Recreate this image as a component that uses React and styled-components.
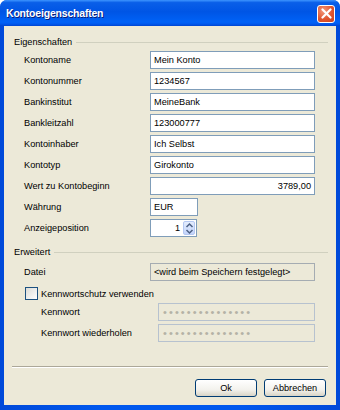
import React from "react";
import styled, { createGlobalStyle } from "styled-components";

const GlobalStyle = createGlobalStyle`
  * { box-sizing: border-box; }
  body {
    margin: 0;
    background: #ffffff;
    font-family: "Liberation Sans", Arial, sans-serif;
  }
`;

const mainFields = [
  { label: "Kontoname", value: "Mein Konto" },
  { label: "Kontonummer", value: "1234567" },
  { label: "Bankinstitut", value: "MeineBank" },
  { label: "Bankleitzahl", value: "123000777" },
  { label: "Kontoinhaber", value: "Ich Selbst" },
  { label: "Kontotyp", value: "Girokonto" },
  { label: "Wert zu Kontobeginn", value: "3789,00", align: "right" },
  { label: "Währung", value: "EUR", width: 48 },
];

const DOTS = "•••••••••••••••";

export default function App() {
  return (
    <>
      <GlobalStyle />
      <Window>
        <TitleBar>
          <Title>Kontoeigenschaften</Title>
          <CloseButton aria-label="Schließen">
            <svg width="11" height="11" viewBox="0 0 11 11">
              <path d="M1.5 1.5 L9.5 9.5 M9.5 1.5 L1.5 9.5" stroke="#fff" strokeWidth="2.2" strokeLinecap="round" />
            </svg>
          </CloseButton>
        </TitleBar>
        <Frame>
          <Client>
            <GroupHeader>Eigenschaften</GroupHeader>
            <FieldGrid $labelWidth={126} $indent={10} $top={3}>
              {mainFields.map((f) => (
                <React.Fragment key={f.label}>
                  <Label>{f.label}</Label>
                  <Field $width={f.width || 165} $align={f.align}>
                    {f.value}
                  </Field>
                </React.Fragment>
              ))}
              <Label>Anzeigeposition</Label>
              <Spinner>
                <SpinValue>1</SpinValue>
                <SpinButtons>
                  <svg width="9" height="13" viewBox="0 0 9 13">
                    <path d="M1.5 5 L4.5 2 L7.5 5" fill="none" stroke="#4d6185" strokeWidth="1.5" />
                    <path d="M1.5 8 L4.5 11 L7.5 8" fill="none" stroke="#4d6185" strokeWidth="1.5" />
                  </svg>
                </SpinButtons>
              </Spinner>
            </FieldGrid>

            <GroupHeader $top={9}>Erweitert</GroupHeader>
            <FieldGrid $labelWidth={126} $indent={10} $top={5}>
              <Label>Datei</Label>
              <Field $width={165} $readonly>
                &lt;wird beim Speichern festgelegt&gt;
              </Field>
            </FieldGrid>
            <CheckRow>
              <CheckBox />
              <Label>Kennwortschutz verwenden</Label>
            </CheckRow>
            <FieldGrid $labelWidth={117} $indent={27} $top={3}>
              <Label>Kennwort</Label>
              <Field $width={157} $disabled>
                <Dots>{DOTS}</Dots>
              </Field>
              <Label>Kennwort wiederholen</Label>
              <Field $width={157} $disabled>
                <Dots>{DOTS}</Dots>
              </Field>
            </FieldGrid>

            <Separator />
            <ButtonRow>
              <Button>Ok</Button>
              <Button>Abbrechen</Button>
            </ButtonRow>
          </Client>
        </Frame>
      </Window>
    </>
  );
}

const Window = styled.div`
  width: 340px;
  height: 410px;
  display: flex;
  flex-direction: column;
  border-radius: 7px 7px 0 0;
  overflow: hidden;
  background: #0054e3;
`;

const TitleBar = styled.div`
  height: 26px;
  flex: none;
  display: flex;
  align-items: center;
  justify-content: space-between;
  padding: 0 5px 0 6px;
  background: linear-gradient(
    to bottom,
    #3d95ff 0%,
    #0a5fe8 10%,
    #0055e5 45%,
    #0062f7 85%,
    #0059ee 92%,
    #0045d1 100%
  );
`;

const Title = styled.span`
  color: #ffffff;
  font-weight: bold;
  font-size: 10.5px;
  letter-spacing: -0.2px;
  text-shadow: 1px 1px 0 #0a1e79;
`;

const CloseButton = styled.button`
  width: 18px;
  height: 18px;
  margin-top: 1px;
  padding: 0;
  display: flex;
  align-items: center;
  justify-content: center;
  border: 1px solid #ffffff;
  border-radius: 3px;
  background: radial-gradient(circle at 35% 30%, #f29a7e 0%, #e0552f 55%, #c7421f 100%);
  cursor: pointer;
`;

const Frame = styled.div`
  flex: 1;
  display: flex;
  padding: 0 4px 5px;
  background: linear-gradient(to right, #0049d9, #0058ee 30%, #0058ee 70%, #0049d9);
`;

const Client = styled.div`
  flex: 1;
  display: flex;
  flex-direction: column;
  padding: 10px 8px 0 10px;
  background: #ece9d8;
  font-size: 9.2px;
  color: #000000;
`;

const GroupHeader = styled.div`
  height: 12px;
  margin-top: ${(p) => p.$top || 0}px;
  display: flex;
  align-items: center;
  gap: 4px;
  font-size: 9.2px;
  &::after {
    content: "";
    flex: 1;
    height: 1px;
    background: #d0d0bf;
  }
`;

const FieldGrid = styled.div`
  display: grid;
  grid-template-columns: ${(p) => p.$labelWidth}px auto;
  grid-auto-rows: 18px;
  row-gap: 3px;
  align-items: center;
  justify-items: start;
  padding-left: ${(p) => p.$indent}px;
  margin-top: ${(p) => p.$top}px;
`;

const Label = styled.span`
  font-size: 9.2px;
  white-space: nowrap;
`;

const Field = styled.div`
  width: ${(p) => p.$width}px;
  height: 18px;
  display: flex;
  align-items: center;
  justify-content: ${(p) => (p.$align === "right" ? "flex-end" : "flex-start")};
  padding: 0 3px;
  border: 1px solid ${(p) => (p.$readonly ? "#a5acb2" : p.$disabled ? "#b7c2cf" : "#7f9db9")};
  background: ${(p) => (p.$readonly || p.$disabled ? "#ece9d8" : "#ffffff")};
  font-size: 9.2px;
  white-space: nowrap;
  overflow: hidden;
`;

const Spinner = styled.div`
  width: 47px;
  height: 18px;
  display: flex;
  align-items: stretch;
  border: 1px solid #7f9db9;
  background: #ffffff;
`;

const SpinValue = styled.span`
  flex: 1;
  display: flex;
  align-items: center;
  justify-content: flex-end;
  padding-right: 3px;
  font-size: 9.2px;
`;

const SpinButtons = styled.div`
  width: 12px;
  margin: 1px 1px 1px 0;
  display: flex;
  align-items: center;
  justify-content: center;
  border: 1px solid #b5c8f2;
  border-radius: 2px;
  background: linear-gradient(to bottom, #e3ecfd, #c3d4fb);
`;

const CheckRow = styled.div`
  height: 13px;
  margin-top: 6px;
  padding-left: 11px;
  display: flex;
  align-items: center;
  gap: 3px;
`;

const CheckBox = styled.span`
  width: 13px;
  height: 13px;
  flex: none;
  border: 1px solid #1c5180;
  background: linear-gradient(135deg, #dcdcd7, #ffffff);
`;

const Dots = styled.span`
  color: #b4b2a6;
  font-size: 11px;
  letter-spacing: 2.1px;
  padding-left: 1px;
`;

const Separator = styled.div`
  height: 2px;
  margin: 24px 0 0 -2px;
  border-top: 1px solid #aca899;
  border-bottom: 1px solid #ffffff;
`;

const ButtonRow = styled.div`
  display: flex;
  justify-content: flex-end;
  gap: 7px;
  margin-top: 11px;
  padding-right: 2px;
`;

const Button = styled.button`
  width: 62px;
  height: 18px;
  padding: 0;
  border: 1px solid #003c74;
  border-radius: 3px;
  background: linear-gradient(to bottom, #ffffff 0%, #f3f2ed 60%, #d8d4c6 100%);
  font-family: "Liberation Sans", Arial, sans-serif;
  font-size: 9.2px;
  color: #000000;
`;
